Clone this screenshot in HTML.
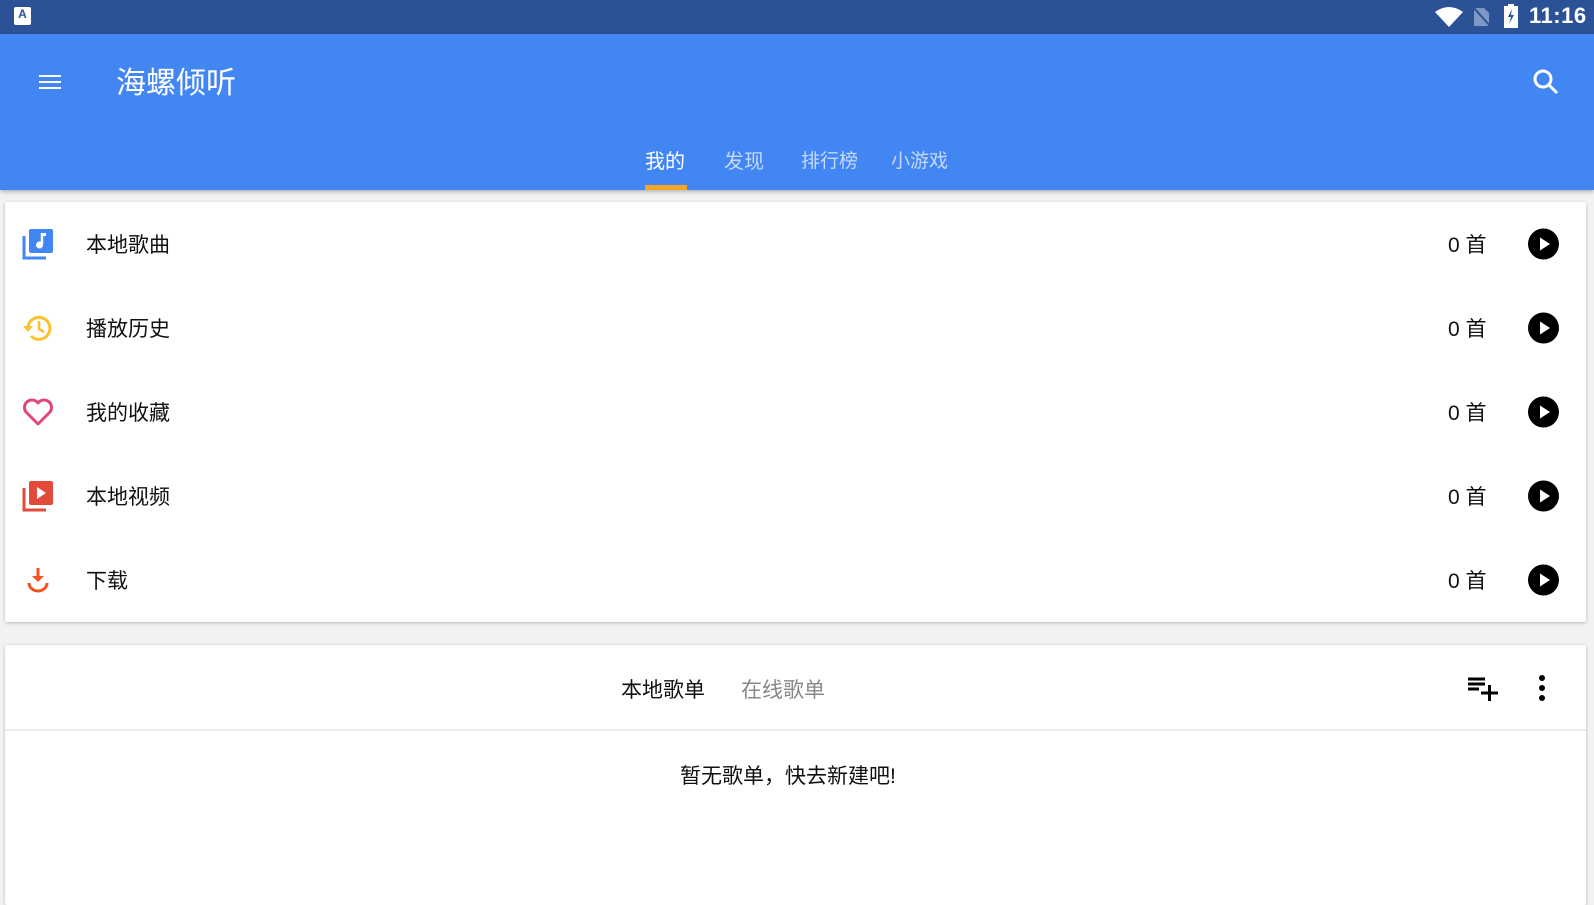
<!DOCTYPE html>
<html><head><meta charset="utf-8"><style>
*{margin:0;padding:0;box-sizing:border-box}
body{width:1594px;height:896px;overflow:hidden;background:#f2f2f2;font-family:"Liberation Sans","Noto Sans CJK SC",sans-serif;position:relative}
.abs{position:absolute}
.sb{left:0;top:0;width:1594px;height:34px;background:#2b5297}
.ab{left:0;top:34px;width:1594px;height:156px;background:#4286f4;box-shadow:0 2px 4px rgba(0,0,0,.25)}
.t{color:#fff;white-space:nowrap;line-height:1}
.card{background:#fff;box-shadow:0 1px 3px rgba(0,0,0,.25);border-radius:2px}
.row{position:absolute;left:0;width:100%;height:84px}
.lbl{position:absolute;left:81px;top:50%;transform:translateY(-50%);font-size:21px;color:#111;white-space:nowrap}
.cnt{position:absolute;left:1443px;top:50%;transform:translateY(-50%);font-size:21px;color:#111;white-space:nowrap}
.ic{position:absolute;left:22px;top:50%;transform:translateY(-50%)}
.pl{position:absolute;left:1523px;top:50%;transform:translateY(-50%)}
</style></head><body>
<div class="abs sb"></div>
<div class="abs" style="left:14px;top:7px;width:17px;height:18px;background:#fff;border-radius:2px;color:#2b5297;font-size:12px;font-weight:bold;text-align:center;line-height:15px">A</div>
<svg class="abs" style="left:1434px;top:6px" width="30" height="22" viewBox="0 0 30 22"><path d="M1 6 Q15 -4 29 6 L15 21 Z" fill="#fff"/></svg>
<svg class="abs" style="left:1472px;top:6px" width="20" height="22" viewBox="0 0 20 22"><path d="M2 2 H12 L17 7 V20 H2 Z" fill="#7f97c4"/><path d="M1 1 L19 21" stroke="#2b5297" stroke-width="2"/></svg>
<svg class="abs" style="left:1504px;top:4px" width="14" height="24" viewBox="0 0 14 24"><rect x="4" y="0" width="6" height="3" fill="#fff"/><rect x="0" y="2" width="14" height="22" fill="#fff"/><path d="M8 5 L4 13 H7 L5 20 L10 11 H7 Z" fill="#2b5297"/></svg>
<div class="abs t" style="left:1529px;top:5px;font-size:22px;font-weight:bold;letter-spacing:0.5px">11:16</div>
<div class="abs ab"></div>
<svg class="abs" style="left:39px;top:74px" width="22" height="16" viewBox="0 0 22 16"><path d="M0 2H22M0 8H22M0 14H22" stroke="#fff" stroke-width="2"/></svg>
<div class="abs t" style="left:116px;top:69px;font-size:30px">海螺倾听</div>
<svg class="abs" style="left:1532px;top:68px" width="28" height="28" viewBox="0 0 28 28"><circle cx="11" cy="11" r="8" stroke="#fff" stroke-width="3" fill="none"/><path d="M17 17L25 25" stroke="#fff" stroke-width="3"/></svg>
<div class="abs t" style="left:645px;top:152px;font-size:20px">我的</div>
<div class="abs t" style="left:724px;top:152px;font-size:20px;color:#c6d9fb">发现</div>
<div class="abs t" style="left:801px;top:152px;font-size:19px;color:#c6d9fb">排行榜</div>
<div class="abs t" style="left:891px;top:152px;font-size:19px;color:#c6d9fb">小游戏</div>
<div class="abs" style="left:645px;top:185px;width:42px;height:5px;background:#f5a623"></div>

<div class="abs card" style="left:5px;top:202px;width:1581px;height:420px">
 <div class="row" style="top:0">
  <svg class="ic" style="left:17px" width="32" height="32" viewBox="0 0 32 32"><path d="M2 8V30H24" stroke="#4286f4" stroke-width="3" fill="none"/><rect x="7" y="1" width="24" height="24" rx="2" fill="#4286f4"/><path d="M20 5V16" stroke="#fff" stroke-width="2.5"/><circle cx="17.5" cy="17" r="3.5" fill="#fff"/><path d="M20 5H24V8H20Z" fill="#fff"/></svg>
  <div class="lbl">本地歌曲</div><div class="cnt">0 首</div>
  <svg class="pl" width="31" height="31" viewBox="0 0 31 31"><circle cx="15.5" cy="15.5" r="15.5"/><path d="M12 9L22 15.5L12 22Z" fill="#fff"/></svg>
 </div>
 <div class="row" style="top:84px">
  <svg class="ic" style="left:17px" width="32" height="32" viewBox="0 0 32 32"><path d="M6 15A11 11 0 1 1 9 24" stroke="#fbc02d" stroke-width="3" fill="none"/><path d="M1 14H11L6 20Z" fill="#fbc02d"/><path d="M17 9V17L22 20" stroke="#fbc02d" stroke-width="2.5" fill="none"/></svg>
  <div class="lbl">播放历史</div><div class="cnt">0 首</div>
  <svg class="pl" width="31" height="31" viewBox="0 0 31 31"><circle cx="15.5" cy="15.5" r="15.5"/><path d="M12 9L22 15.5L12 22Z" fill="#fff"/></svg>
 </div>
 <div class="row" style="top:168px">
  <svg class="ic" style="left:17px" width="32" height="32" viewBox="0 0 32 32"><path d="M16 28L4 16A7 7 0 0 1 16 7A7 7 0 0 1 28 16Z" stroke="#e0457b" stroke-width="3" fill="none" stroke-linejoin="round"/></svg>
  <div class="lbl">我的收藏</div><div class="cnt">0 首</div>
  <svg class="pl" width="31" height="31" viewBox="0 0 31 31"><circle cx="15.5" cy="15.5" r="15.5"/><path d="M12 9L22 15.5L12 22Z" fill="#fff"/></svg>
 </div>
 <div class="row" style="top:252px">
  <svg class="ic" style="left:17px" width="32" height="32" viewBox="0 0 32 32"><path d="M2 8V30H24" stroke="#e24a3b" stroke-width="3" fill="none"/><rect x="7" y="1" width="24" height="24" rx="2" fill="#e24a3b"/><path d="M15 7L24 13L15 19Z" fill="#fff"/></svg>
  <div class="lbl">本地视频</div><div class="cnt">0 首</div>
  <svg class="pl" width="31" height="31" viewBox="0 0 31 31"><circle cx="15.5" cy="15.5" r="15.5"/><path d="M12 9L22 15.5L12 22Z" fill="#fff"/></svg>
 </div>
 <div class="row" style="top:336px">
  <svg class="ic" style="left:22px" width="22" height="26" viewBox="0 0 22 26"><path d="M11 1V13" stroke="#f4511e" stroke-width="3"/><path d="M5 9L11 15L17 9Z" fill="#f4511e"/><path d="M2 16A9 8 0 0 0 20 16" stroke="#f4511e" stroke-width="3" fill="none"/></svg>
  <div class="lbl">下载</div><div class="cnt">0 首</div>
  <svg class="pl" width="31" height="31" viewBox="0 0 31 31"><circle cx="15.5" cy="15.5" r="15.5"/><path d="M12 9L22 15.5L12 22Z" fill="#fff"/></svg>
 </div>
</div>

<div class="abs card" style="left:5px;top:645px;width:1581px;height:260px">
 <div class="abs" style="left:0;top:84px;width:100%;height:2px;background:#ececec"></div>
 <div class="abs" style="left:616px;top:29px;font-size:21px;color:#111;white-space:nowrap">本地歌单</div>
 <div class="abs" style="left:736px;top:29px;font-size:21px;color:#888;white-space:nowrap">在线歌单</div>
 <svg class="abs" style="left:1463px;top:32px" width="32" height="24" viewBox="0 0 32 24"><path d="M0 2H17M0 7H17M0 12H11M13 16H30M21.5 8V24" stroke="#000" stroke-width="3"/></svg>
 <svg class="abs" style="left:1532px;top:30px" width="10" height="26" viewBox="0 0 10 26"><circle cx="5" cy="3" r="3"/><circle cx="5" cy="13" r="3"/><circle cx="5" cy="23" r="3"/></svg>
 <div class="abs" style="left:675px;top:115px;font-size:21px;color:#111;white-space:nowrap">暂无歌单，快去新建吧!</div>
</div>
</body></html>
